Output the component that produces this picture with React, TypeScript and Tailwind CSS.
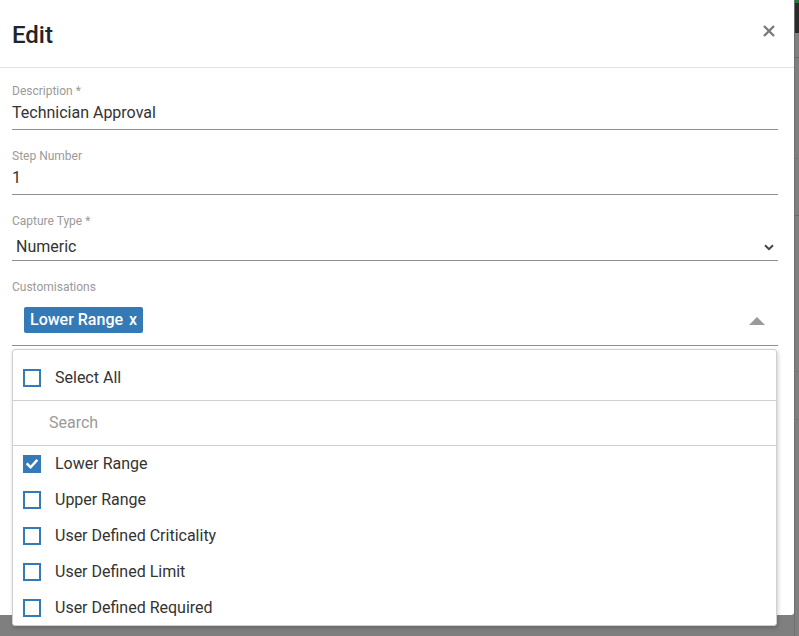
import React from "react";

const font = { fontFamily: "Roboto, 'Liberation Sans', sans-serif" };

function Box({ checked }: { checked?: boolean }) {
  if (checked) {
    return (
      <span className="w-[18px] h-[18px] bg-[#337ab7] flex items-center justify-center shrink-0">
        <svg width="12" height="10" viewBox="0 0 12 10">
          <path d="M1.5 5.2 L4.6 8.2 L10.5 1.8" fill="none" stroke="#fff" strokeWidth="2.4" strokeLinecap="square" />
        </svg>
      </span>
    );
  }
  return <span className="w-[18px] h-[18px] border-2 border-[#337ab7] bg-white shrink-0" />;
}

function Field({ label, value }: { label: string; value: string }) {
  return (
    <div className="flex flex-col">
      <div className="h-4 leading-4 text-[12px] text-[#9a9a9a]">{label}</div>
      <div className="h-[31px] pt-[2px] leading-[24px] text-[16px] text-[#333] border-b border-[#8f8f8f]">{value}</div>
    </div>
  );
}

export default function App() {
  const items = ["Lower Range", "Upper Range", "User Defined Criticality", "User Defined Limit", "User Defined Required"];
  return (
    <div className="w-[799px] h-[636px] bg-[#7f7f7f] flex overflow-hidden" style={font}>
      <div className="w-[794px] h-[615px] bg-white rounded-br-[3px] relative flex flex-col shrink-0">
        <div className="h-[68px] border-b border-[#e2e2e2] flex items-center justify-between pl-3 pr-[19px] shrink-0">
          <div className="text-[24px] font-medium text-[#212529] leading-none pt-[2px]">Edit</div>
          <svg width="12" height="12" viewBox="0 0 12 12" className="mt-[-6px]">
            <path d="M1 1 L11 11 M11 1 L1 11" stroke="#7a7a7a" strokeWidth="2.4" />
          </svg>
        </div>
        <div className="pl-3 pr-4 pt-[15px] flex flex-col gap-[18px]">
          <Field label="Description *" value="Technician Approval" />
          <Field label="Step Number" value="1" />
          <div className="flex flex-col">
            <div className="h-4 leading-4 text-[12px] text-[#9a9a9a]">Capture Type *</div>
            <div className="h-[32px] pt-[5px] pl-1 pr-[4px] flex items-center justify-between text-[16px] text-[#333] border-b border-[#8f8f8f]">
              <span>Numeric</span>
              <svg width="10" height="7" viewBox="0 0 10 7">
                <path d="M1 1.2 L5 5.2 L9 1.2" fill="none" stroke="#444" strokeWidth="2" />
              </svg>
            </div>
          </div>
          <div className="flex flex-col">
            <div className="h-4 leading-4 text-[12px] text-[#9a9a9a]">Customisations</div>
            <div className="h-[51px] pt-[12px] pl-3 pr-[13px] flex items-start justify-between border-b border-[#8f8f8f]">
              <span className="h-[26px] px-[6px] rounded-[2px] bg-[#337ab7] text-white text-[16px] font-medium leading-[26px] flex gap-[6px]">
                <span>Lower Range</span>
                <span>x</span>
              </span>
              <span className="mt-[10px] w-0 h-0 border-l-[8px] border-r-[8px] border-b-[8px] border-l-transparent border-r-transparent border-b-[#9a9a9a]" />
            </div>
          </div>
        </div>

        <div className="absolute left-3 top-[349px] w-[765px] h-[277px] bg-white border border-[#cfcfcf] rounded-[3px] shadow-[1px_2px_4px_rgba(0,0,0,0.2)] flex flex-col text-[16px] text-[#333]">
          <div className="h-[51px] pt-[5px] flex items-center gap-[14px] pl-[10px] border-b border-[#d0d0d0] shrink-0">
            <Box />
            <span>Select All</span>
          </div>
          <div className="h-[45px] flex items-center pl-9 border-b border-[#d0d0d0] text-[#9a9a9a] shrink-0">Search</div>
          {items.map((it, i) => (
            <div key={it} className="h-[36px] flex items-center gap-[14px] pl-[10px] shrink-0">
              <Box checked={i === 0} />
              <span>{it}</span>
            </div>
          ))}
        </div>
      </div>
      <div className="flex-1 flex flex-col border-l border-[#6f6f6f]">
        <div className="h-[3px] bg-[#1f7a3a]" />
        <div className="h-[30px] bg-[#2a2a2a]" />
        <div className="h-[25px] border-b border-[#6a6a6a]" />
        <div className="h-[101px] border-b border-[#757575]" />
        <div className="h-[57px] border-b border-[#6a6a6a]" />
        <div className="h-[156px] border-b border-[#757575]" />
        <div className="h-[48px] border-b border-[#757575]" />
      </div>
    </div>
  );
}
